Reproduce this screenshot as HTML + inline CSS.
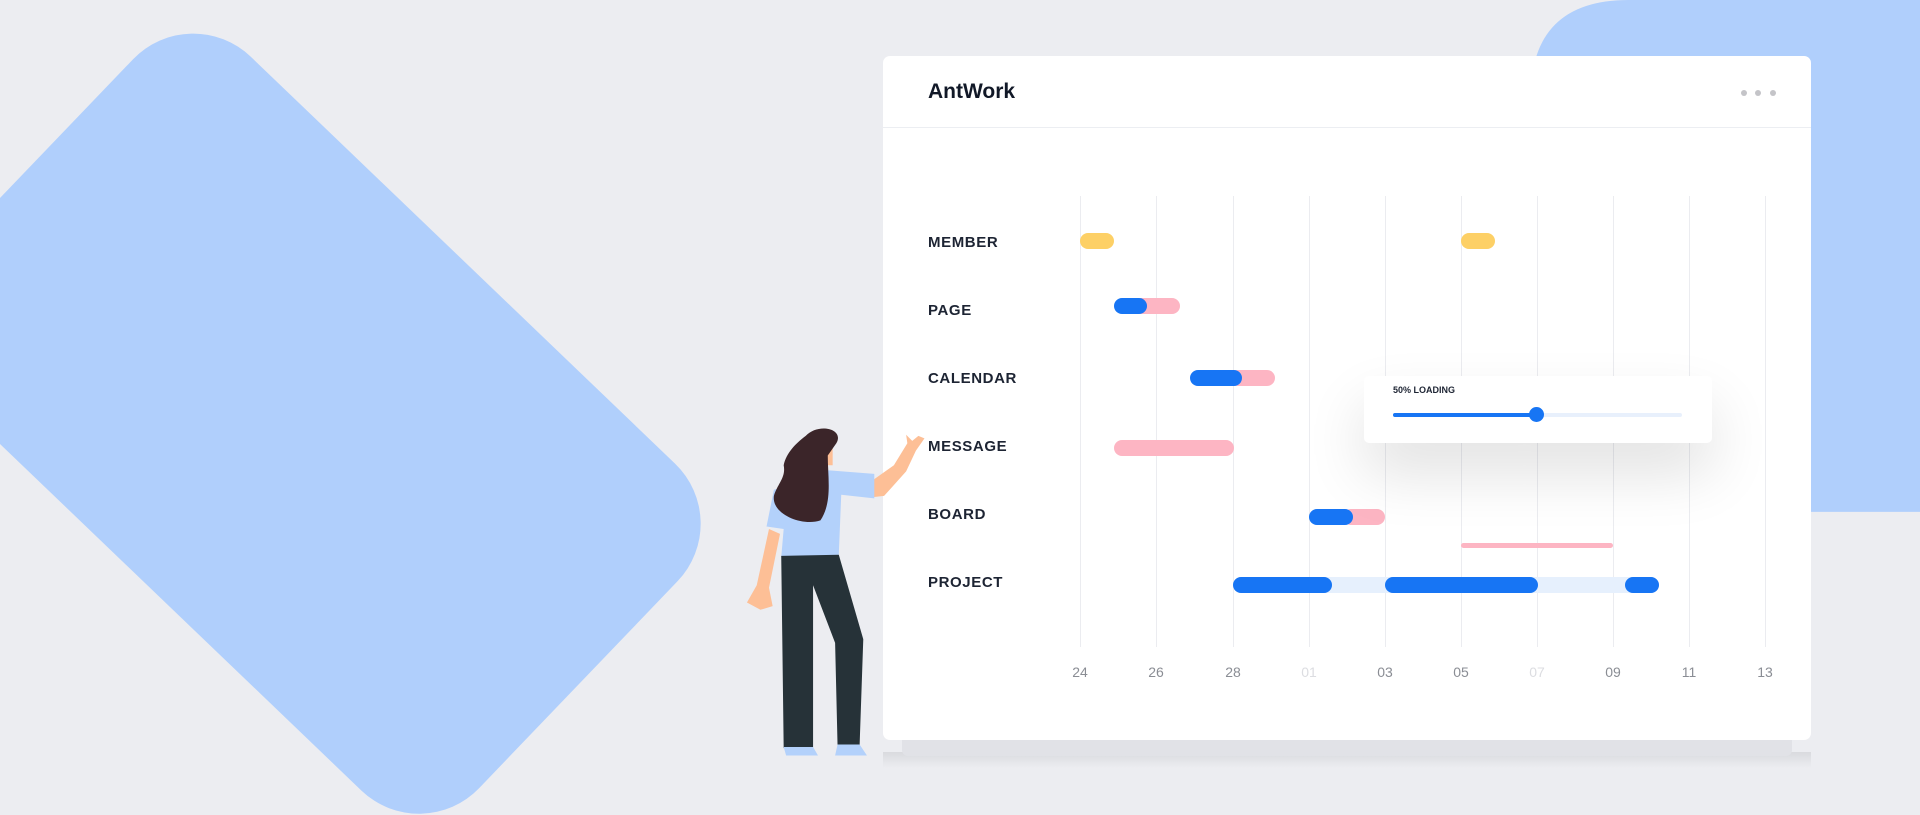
<!DOCTYPE html>
<html><head><meta charset="utf-8"><style>
*{margin:0;padding:0;box-sizing:border-box}
body{width:1920px;height:815px;overflow:hidden;background:#ecedf1;position:relative;font-family:"Liberation Sans",sans-serif}
.abs{position:absolute}
.card{left:883px;top:56px;width:928px;height:684px;background:#fff;border-radius:7px}
.sh1{left:902px;top:736px;width:890px;height:20px;background:#e1e2e7;border-radius:0 0 6px 6px}
.sh2{left:883px;top:752px;width:928px;height:16px;background:linear-gradient(#d9dade,#ecedf1)}
.title{left:928px;top:80px;font-size:21px;font-weight:bold;color:#111827}
.hdr{left:883px;top:127px;width:928px;height:1px;background:#eceef2}
.dot{width:6px;height:6px;border-radius:50%;background:#c4c4c8;top:90px}
.vl{top:196px;height:451px;width:1px;background:#ebecf0}
.lbl{left:928px;font-size:15px;font-weight:bold;color:#1d2433;letter-spacing:.6px}
.ax{top:664px;font-size:14px;color:#8a8d94;width:40px;text-align:center}
.bar{height:16px;border-radius:8px}
.y{background:#fdd066}.b{background:#1775f4}.p{background:#fdb5c3}
.pop{left:1364px;top:376px;width:348px;height:67px;background:#fff;border-radius:5px;box-shadow:0 30px 60px rgba(0,0,0,.12)}
</style></head><body>
<svg class="abs" style="left:0;top:0" width="1920" height="815">
<g transform="scale(1.2245)">
<rect x="-308" y="-185" width="616" height="370" rx="68" fill="#b0cffc" transform="translate(250,346) rotate(43.8)"/>
<path d="M1330,0 L1568,0 L1568,418 L1250,418 L1250,80 Q1250,0 1330,0Z" fill="#b0cffc"/>
</g></svg>
<div class="abs sh2"></div><div class="abs sh1"></div>
<div class="abs card"></div>
<div class="abs title">AntWork</div>
<div class="abs hdr"></div>
<div class="abs dot" style="left:1741px"></div><div class="abs dot" style="left:1755px"></div><div class="abs dot" style="left:1770px"></div>

<div class="abs vl" style="left:1080px"></div><div class="abs vl" style="left:1156px"></div><div class="abs vl" style="left:1233px"></div><div class="abs vl" style="left:1309px"></div><div class="abs vl" style="left:1385px"></div><div class="abs vl" style="left:1461px"></div><div class="abs vl" style="left:1537px"></div><div class="abs vl" style="left:1613px"></div><div class="abs vl" style="left:1689px"></div><div class="abs vl" style="left:1765px"></div>

<div class="abs lbl" style="top:234px">MEMBER</div>
<div class="abs lbl" style="top:302px">PAGE</div>
<div class="abs lbl" style="top:370px">CALENDAR</div>
<div class="abs lbl" style="top:438px">MESSAGE</div>
<div class="abs lbl" style="top:506px">BOARD</div>
<div class="abs lbl" style="top:574px">PROJECT</div>

<div class="abs ax" style="left:1060px">24</div><div class="abs ax" style="left:1136px">26</div><div class="abs ax" style="left:1213px">28</div><div class="abs ax" style="left:1289px;color:#dcdde1">01</div><div class="abs ax" style="left:1365px">03</div><div class="abs ax" style="left:1441px">05</div><div class="abs ax" style="left:1517px;color:#dcdde1">07</div><div class="abs ax" style="left:1593px">09</div><div class="abs ax" style="left:1669px">11</div><div class="abs ax" style="left:1745px">13</div>

<div class="abs bar y" style="left:1080px;top:233px;width:34px"></div>
<div class="abs bar y" style="left:1461px;top:233px;width:34px"></div>
<div class="abs bar p" style="left:1130px;top:298px;width:50px"></div>
<div class="abs bar b" style="left:1114px;top:298px;width:33px"></div>
<div class="abs bar p" style="left:1230px;top:370px;width:45px"></div>
<div class="abs bar b" style="left:1190px;top:370px;width:52px"></div>
<div class="abs bar p" style="left:1114px;top:440px;width:120px"></div>
<div class="abs bar p" style="left:1343px;top:509px;width:42px"></div>
<div class="abs bar b" style="left:1309px;top:509px;width:44px"></div>
<div class="abs" style="left:1461px;top:543px;width:152px;height:5px;background:#fdb5c3;border-radius:3px"></div>
<div class="abs bar" style="left:1233px;top:577px;width:426px;background:#e6f0fd"></div>
<div class="abs bar b" style="left:1233px;top:577px;width:99px"></div>
<div class="abs bar b" style="left:1385px;top:577px;width:153px"></div>
<div class="abs bar b" style="left:1625px;top:577px;width:34px"></div>

<div class="abs pop"></div>
<div class="abs" style="left:1393px;top:385px;font-size:9px;font-weight:bold;color:#1d2433">50% LOADING</div>
<div class="abs" style="left:1393px;top:413px;width:289px;height:4px;background:#e8f0fc;border-radius:2px"></div>
<div class="abs" style="left:1393px;top:413px;width:144px;height:4px;background:#1775f4;border-radius:2px"></div>
<div class="abs" style="left:1529px;top:407px;width:15px;height:15px;border-radius:50%;background:#1775f4"></div>

<svg class="abs" style="left:0;top:0" width="1920" height="815">
<g transform="scale(1.2245)">
<path d="M713,392 L730,380 L741,362 L740,355 L745,360 L750,356 L755,358 L748,368 L740,385 L722,405 L713,406Z" fill="#fdbf96"/>
<path d="M628,432 L637,436 L628,480 L631,495 L621,498 L610,492 L618,478 Z" fill="#fdbf96"/>
<path d="M650,395 L676,384 L714,387 L714,407 L687,404 L685,453 L638,455 L640,432 L626,430 L632,400 Z" fill="#b3d1fb"/>
<path d="M638,454 L685,453 L705,522 L702,609 L684,609 L682,525 L664,478 L664,610 L640,611 Z" fill="#263238"/>
<path d="M640,610 L664,610 L668,617 L642,617Z M684,608 L702,608 L708,617 L682,617Z" fill="#b3d1fb"/>
<path d="M672,365 L680,364 L680,380 L673,380Z" fill="#fdbf96"/>
<path d="M658,356 C668,345 690,350 683,362 L676,372 C676,390 680,410 670,425 C655,430 630,420 632,405 C635,395 642,390 640,380 C642,370 650,362 658,356Z" fill="#3b2529"/>
</g></svg>
</body></html>
